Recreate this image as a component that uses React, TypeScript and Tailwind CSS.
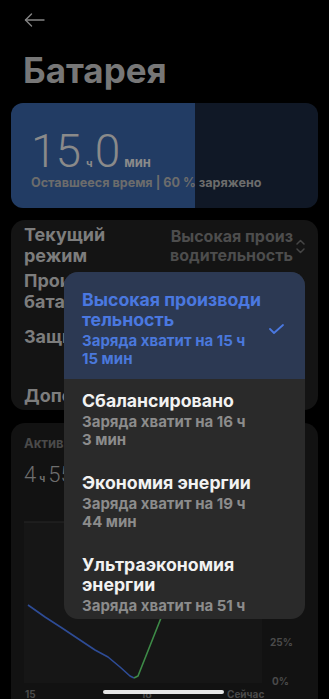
import React from "react";

type Mode = {
  title: string[];
  sub: string[];
  active?: boolean;
};

const MODES: Mode[] = [
  { title: ["Высокая производи", "тельность"], sub: ["Заряда хватит на 15 ч", "15 мин"], active: true },
  { title: ["Сбалансировано"], sub: ["Заряда хватит на 16 ч", "3 мин"] },
  { title: ["Экономия энергии"], sub: ["Заряда хватит на 19 ч", "44 мин"] },
  { title: ["Ультраэкономия", "энергии"], sub: ["Заряда хватит на 51 ч"] },
];

function BackArrow() {
  return (
    <svg width="21" height="14" viewBox="0 0 21 14" fill="none" stroke="#858585" strokeWidth="1.4" strokeLinecap="round" strokeLinejoin="round">
      <path d="M20 7H1.5" />
      <path d="M7.5 1L1.5 7l6 6" />
    </svg>
  );
}

function UpDown() {
  return (
    <svg width="9" height="15" viewBox="0 0 9 15" fill="none" stroke="#454545" strokeWidth="1.5" strokeLinecap="round" strokeLinejoin="round">
      <path d="M1 5L4.5 1.5 8 5" />
      <path d="M1 10l3.5 3.5L8 10" />
    </svg>
  );
}

function Check() {
  return (
    <svg width="15" height="10" viewBox="0 0 15 10" fill="none" stroke="#4a78e0" strokeWidth="1.8" strokeLinecap="round" strokeLinejoin="round">
      <path d="M1 5l4 4 9-8" />
    </svg>
  );
}

function UsageChart() {
  return (
    <svg width="307" height="200" viewBox="0 0 307 200" className="block">
      <rect x="13" y="22" width="238" height="161" fill="#161616" />
      <line x1="13" y1="22" x2="251" y2="22" stroke="#262626" strokeWidth="1" />
      <polyline
        points="17,105 34,117 51,128 69,140 84,150 97,157 109,167 119,176 123,178"
        fill="none"
        stroke="#2e4c96"
        strokeWidth="1.6"
        strokeLinejoin="round"
      />
      <polyline
        points="123,178 127,176 150,118 162,88"
        fill="none"
        stroke="#3d8a47"
        strokeWidth="1.6"
        strokeLinejoin="round"
      />
      <g fill="#4a4a4a" fontSize="10" fontWeight="700" fontFamily="Inter, sans-serif">
        <text x="259" y="146">25%</text>
        <text x="261" y="185">0%</text>
        <text x="14" y="198">15</text>
        <text x="130" y="198">18</text>
        <text x="216" y="198">Сейчас</text>
      </g>
    </svg>
  );
}

export default function App() {
  return (
    <div className="relative h-[699px] w-full overflow-hidden bg-black font-[Inter,'Noto_Sans',sans-serif]">
      <div className="px-[11px]">
        <div className="flex h-[40px] items-center pl-[13px] pb-[1px]">
          <BackArrow />
        </div>
        <h1 className="mt-[10px] pl-[12px] text-[35px] font-bold leading-[40px] text-[#777777]">Батарея</h1>

        <div className="mt-[13px] h-[105px] rounded-[12px] bg-[linear-gradient(90deg,#223c64_60%,#101826_60%)] pl-[20px] pt-[25px]">
          <div className="flex items-baseline text-[#8a8a8a]">
            <span className="font-[Roboto,sans-serif] text-[46px] font-light leading-none tracking-[-1px]">15</span>
            <span className="ml-[6px] text-[11px] font-bold">ч</span>
            <span className="ml-[2px] font-[Roboto,sans-serif] text-[46px] font-light leading-none">0</span>
            <span className="ml-[4px] text-[13px] font-bold">мин</span>
          </div>
          <div className="mt-[1px] text-[12.6px] font-bold leading-[16px] text-[#6c6c6c]">
            Оставшееся время | 60 % заряжено
          </div>
        </div>

        <div className="mt-[12px] h-[190px] overflow-hidden rounded-[14px] bg-[#141414] pl-[13px] pr-[13px] pt-[4px]">
          <div className="flex items-start justify-between">
            <div className="text-[18px] font-bold leading-[21px] text-[#7d7d7d]">
              <div>Текущий</div>
              <div>режим</div>
            </div>
            <div className="mt-[3px] flex items-center gap-[3px]">
              <div className="text-right text-[16px] font-bold leading-[19px] text-[#4d4d4d]">
                <div>Высокая произ</div>
                <div>водительность</div>
              </div>
              <UpDown />
            </div>
          </div>
          <div className="mt-[4px] whitespace-nowrap text-[18px] font-bold leading-[21px] text-[#7d7d7d]">
            <div>Производительность</div>
            <div>батареи</div>
          </div>
          <div className="mt-[14px] whitespace-nowrap text-[18px] font-bold leading-[21px] text-[#7d7d7d]">
            Защита батареи
          </div>
          <div className="mt-[38px] whitespace-nowrap text-[18px] font-bold leading-[21px] text-[#7d7d7d]">
            Дополнительные настройки
          </div>
        </div>

        <div className="mt-[13px] h-[300px] overflow-hidden rounded-[14px] bg-[#121212]">
          <div className="px-[13px] pt-[12px]">
            <div className="text-[13px] font-bold leading-[16px] text-[#4a4a4a]">Активное использование</div>
            <div className="mt-[13px] flex items-baseline text-[#6e6e6e]">
              <span className="font-[Roboto,sans-serif] text-[22px] font-light leading-none">4</span>
              <span className="mx-[3px] text-[10px] font-bold">ч</span>
              <span className="font-[Roboto,sans-serif] text-[22px] font-light leading-none">55</span>
              <span className="ml-[3px] text-[10px] font-bold">мин</span>
            </div>
          </div>
          <div className="mt-[14px]">
            <UsageChart />
          </div>
        </div>
      </div>

      <div className="absolute left-[64px] top-[272px] h-[347px] w-[241px] overflow-hidden rounded-[14px] bg-[#2a2a2a]">
        {MODES.map((m, i) => (
          <div
            key={i}
            className={
              m.active
                ? "flex items-center justify-between bg-[#2c3953] pb-[11px] pl-[18px] pr-[21px] pt-[18px]"
                : "flex items-center justify-between py-[12px] pl-[18px] pr-[21px]"
            }
          >
            <div className="whitespace-nowrap">
              <div className={m.active ? "text-[17.7px] font-bold leading-[20px] text-[#4a78e0]" : "text-[17.7px] font-bold leading-[20px] text-[#f2f2f2]"}>
                {m.title.map((t) => (
                  <div key={t}>{t}</div>
                ))}
              </div>
              <div className={m.active ? "mt-[2px] text-[15px] font-bold leading-[18px] text-[#4a78dc]" : "mt-[2px] text-[15px] font-bold leading-[18px] text-[#8c8c8c]"}>
                {m.sub.map((t) => (
                  <div key={t}>{t}</div>
                ))}
              </div>
            </div>
            {m.active && <Check />}
          </div>
        ))}
      </div>

      <div className="absolute left-[103px] top-[690px] h-[4px] w-[121px] rounded-full bg-[#e6e6e6]" />
    </div>
  );
}
